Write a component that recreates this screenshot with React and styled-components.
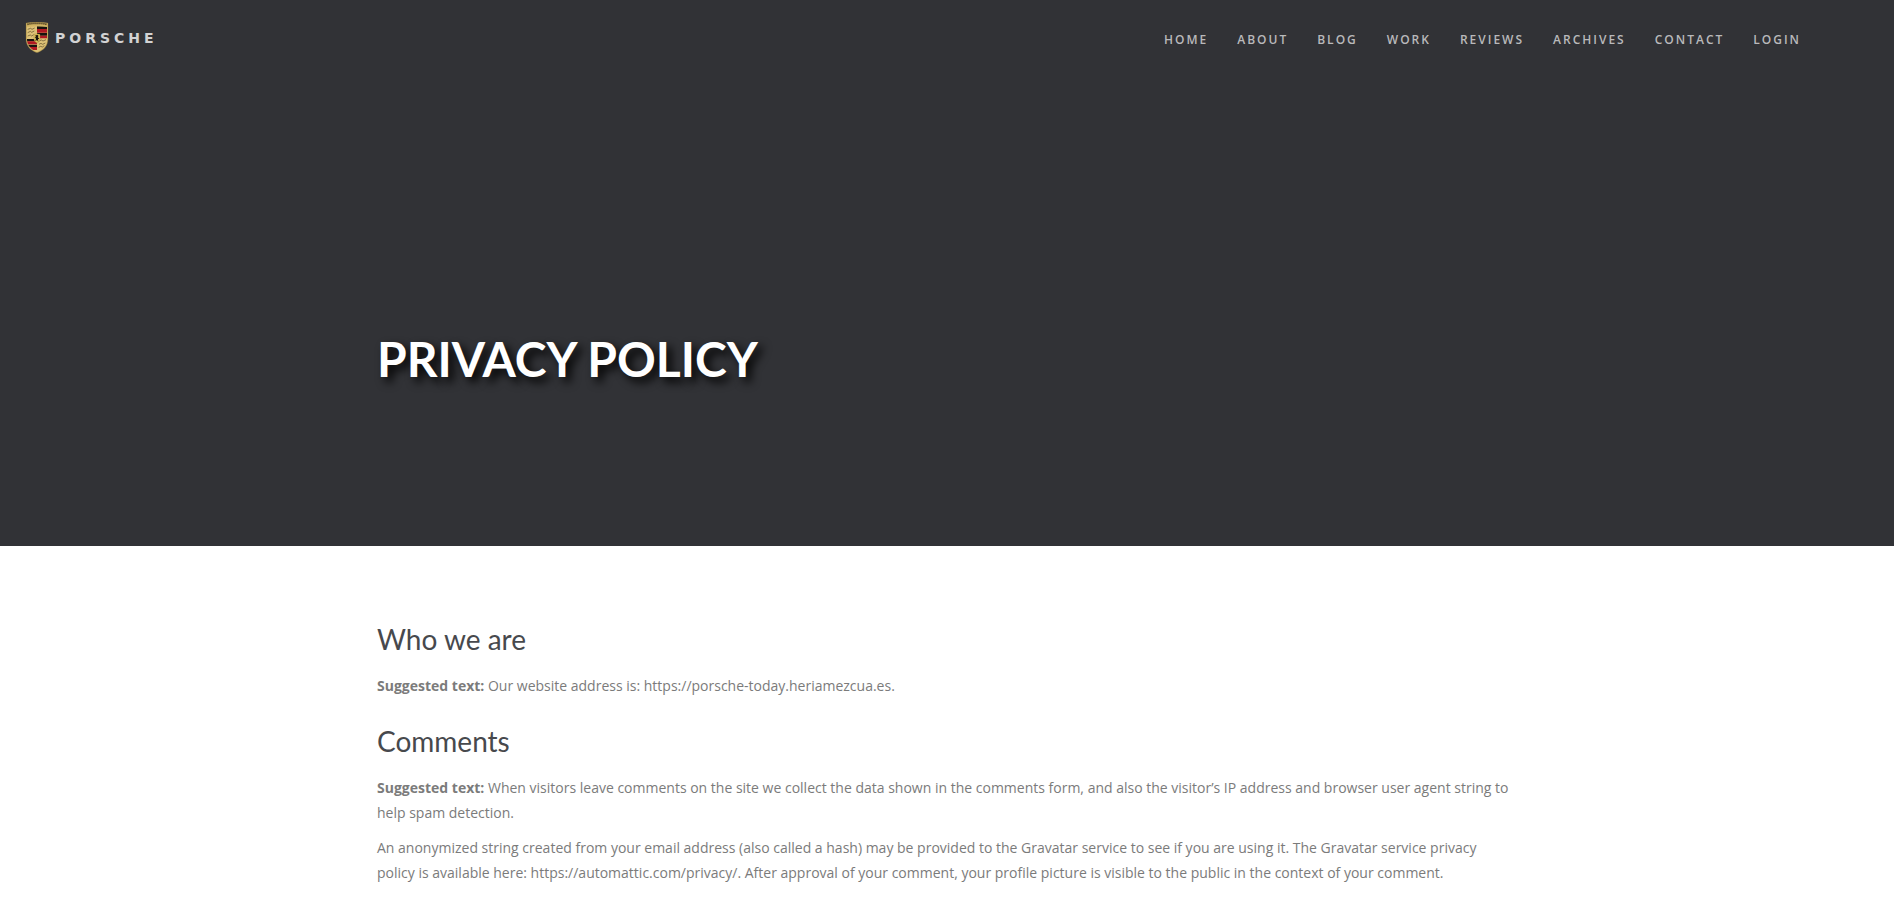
import React from "react";
import styled, { createGlobalStyle } from "styled-components";

const GlobalStyle = createGlobalStyle`
  *, *::before, *::after { box-sizing: border-box; }
  body {
    margin: 0;
    background: #fff;
    color: #7b7b7b;
    font: 14px/25px "Open Sans", "Noto Sans", sans-serif;
  }
`;

const Hero = styled.header`
  display: flex;
  flex-direction: column;
  min-height: 546px;
  background: #313236;
`;

const TopBar = styled.div`
  display: flex;
  align-items: flex-start;
  justify-content: space-between;
  padding: 22px 93px 0 25px;
`;

const Brand = styled.a`
  display: flex;
  align-items: center;
  gap: 6px;
  color: #d2d2d3;
  text-decoration: none;
`;

const CrestSvg = styled.svg`
  display: block;
  width: 24px;
  height: 32px;
`;

const Wordmark = styled.span`
  font: bold 14px/32px "DejaVu Sans", sans-serif;
  letter-spacing: 4px;
`;

const Nav = styled.nav`
  display: flex;
  flex-wrap: wrap;
  gap: 29px;
`;

const NavLink = styled.a`
  color: #b9b9bb;
  font-size: 12px;
  font-weight: 600;
  line-height: 36px;
  letter-spacing: 2px;
  text-decoration: none;
  text-transform: uppercase;

  &:hover { color: #fff; }
`;

const Container = styled.div`
  width: 100%;
  max-width: 1170px;
  margin: 0 auto;
  padding: 0 15px;
`;

const TitleArea = styled(Container)`
  flex: 1;
  padding-top: 271px;
`;

const Title = styled.h1`
  margin: 0;
  color: #fff;
  font: bold 48px/60px Lato, sans-serif;
  text-transform: uppercase;
  text-shadow: 5px 5px 10px #000;
`;

const Content = styled(Container).attrs({ as: "main" })`
  display: block;
  padding-top: 75px;
  padding-bottom: 80px;
`;

const Heading = styled.h2`
  margin: 0 0 16px;
  color: #47494d;
  font: 400 28px/36px Lato, sans-serif;
`;

const Section = styled.section`
  & + & { margin-top: 25px; }
`;

const Paragraph = styled.p`
  margin: 0 0 10px;
`;

function Crest() {
  return (
    <CrestSvg viewBox="30 36 72 96" aria-hidden="true">
      <defs>
        <clipPath id="shield">
          <path d="M36 51Q66 47 96 51V88C96 108 82 120 66 126C50 120 36 108 36 88Z" />
        </clipPath>
      </defs>
      <path
        d="M33 39Q66 33 99 39V86C99 109 84 122 66 128C48 122 33 109 33 86Z"
        fill="#d3b563"
        stroke="#6f6138"
        strokeWidth="1"
      />
      <path d="M37 43Q66 37 95 43" fill="none" stroke="#4a3d20" strokeWidth="5" strokeDasharray="4 2" />
      <g clipPath="url(#shield)">
        <path d="M33 47H99V129H33Z" fill="#ddc277" />
        <path d="M66 48H99V57H66ZM66 69H99V77H66ZM33 87H66V94H33ZM33 104H66V111H33Z" fill="#17130f" />
        <path d="M66 57H99V68H66ZM66 77H99V85H66ZM33 94H66V103H33ZM33 111H66V120H33Z" fill="#b01822" />
        <path
          d="M38 58l9-3 4 3 8-4M38 68l8-4 4 3 8-4M38 78l8-3 4 3 6-4M73 93l6-3 5 3 9-4M72 103l6-3 5 3 8-4M71 112l6-3 5 2 6-4"
          fill="none"
          stroke="#5a4a28"
          strokeWidth="2"
        />
      </g>
      <path d="M57 73Q66 70 75 73V87C75 93 71 97 66 99C61 97 57 93 57 87Z" fill="#e1c45b" stroke="#8d742f" />
      <path d="M60 77l7-3 4 4-3 3 5 5-4 2 1 8-4-6-5 4 2-8-4-5 5 1Z" fill="#18140c" />
    </CrestSvg>
  );
}

const links = ["Home", "About", "Blog", "Work", "Reviews", "Archives", "Contact", "Login"];

export default function App() {
  return (
    <>
      <GlobalStyle />
      <Hero>
        <TopBar>
          <Brand href="#home">
            <Crest />
            <Wordmark>PORSCHE</Wordmark>
          </Brand>
          <Nav aria-label="Main">
            {links.map((label) => (
              <NavLink key={label} href={`#${label.toLowerCase()}`}>{label}</NavLink>
            ))}
          </Nav>
        </TopBar>
        <TitleArea>
          <Title>Privacy Policy</Title>
        </TitleArea>
      </Hero>
      <Content>
        <Section>
          <Heading>Who we are</Heading>
          <Paragraph>
            <strong>Suggested text:</strong> Our website address is: https://porsche-today.heriamezcua.es.
          </Paragraph>
        </Section>
        <Section>
          <Heading>Comments</Heading>
          <Paragraph>
            <strong>Suggested text:</strong> When visitors leave comments on the site we collect the data shown in the
            comments form, and also the visitor’s IP address and browser user agent string to help spam detection.
          </Paragraph>
          <Paragraph>
            An anonymized string created from your email address (also called a hash) may be provided to the Gravatar
            service to see if you are using it. The Gravatar service privacy policy is available here:
            https://automattic.com/privacy/. After approval of your comment, your profile picture is visible to the
            public in the context of your comment.
          </Paragraph>
        </Section>
      </Content>
    </>
  );
}
